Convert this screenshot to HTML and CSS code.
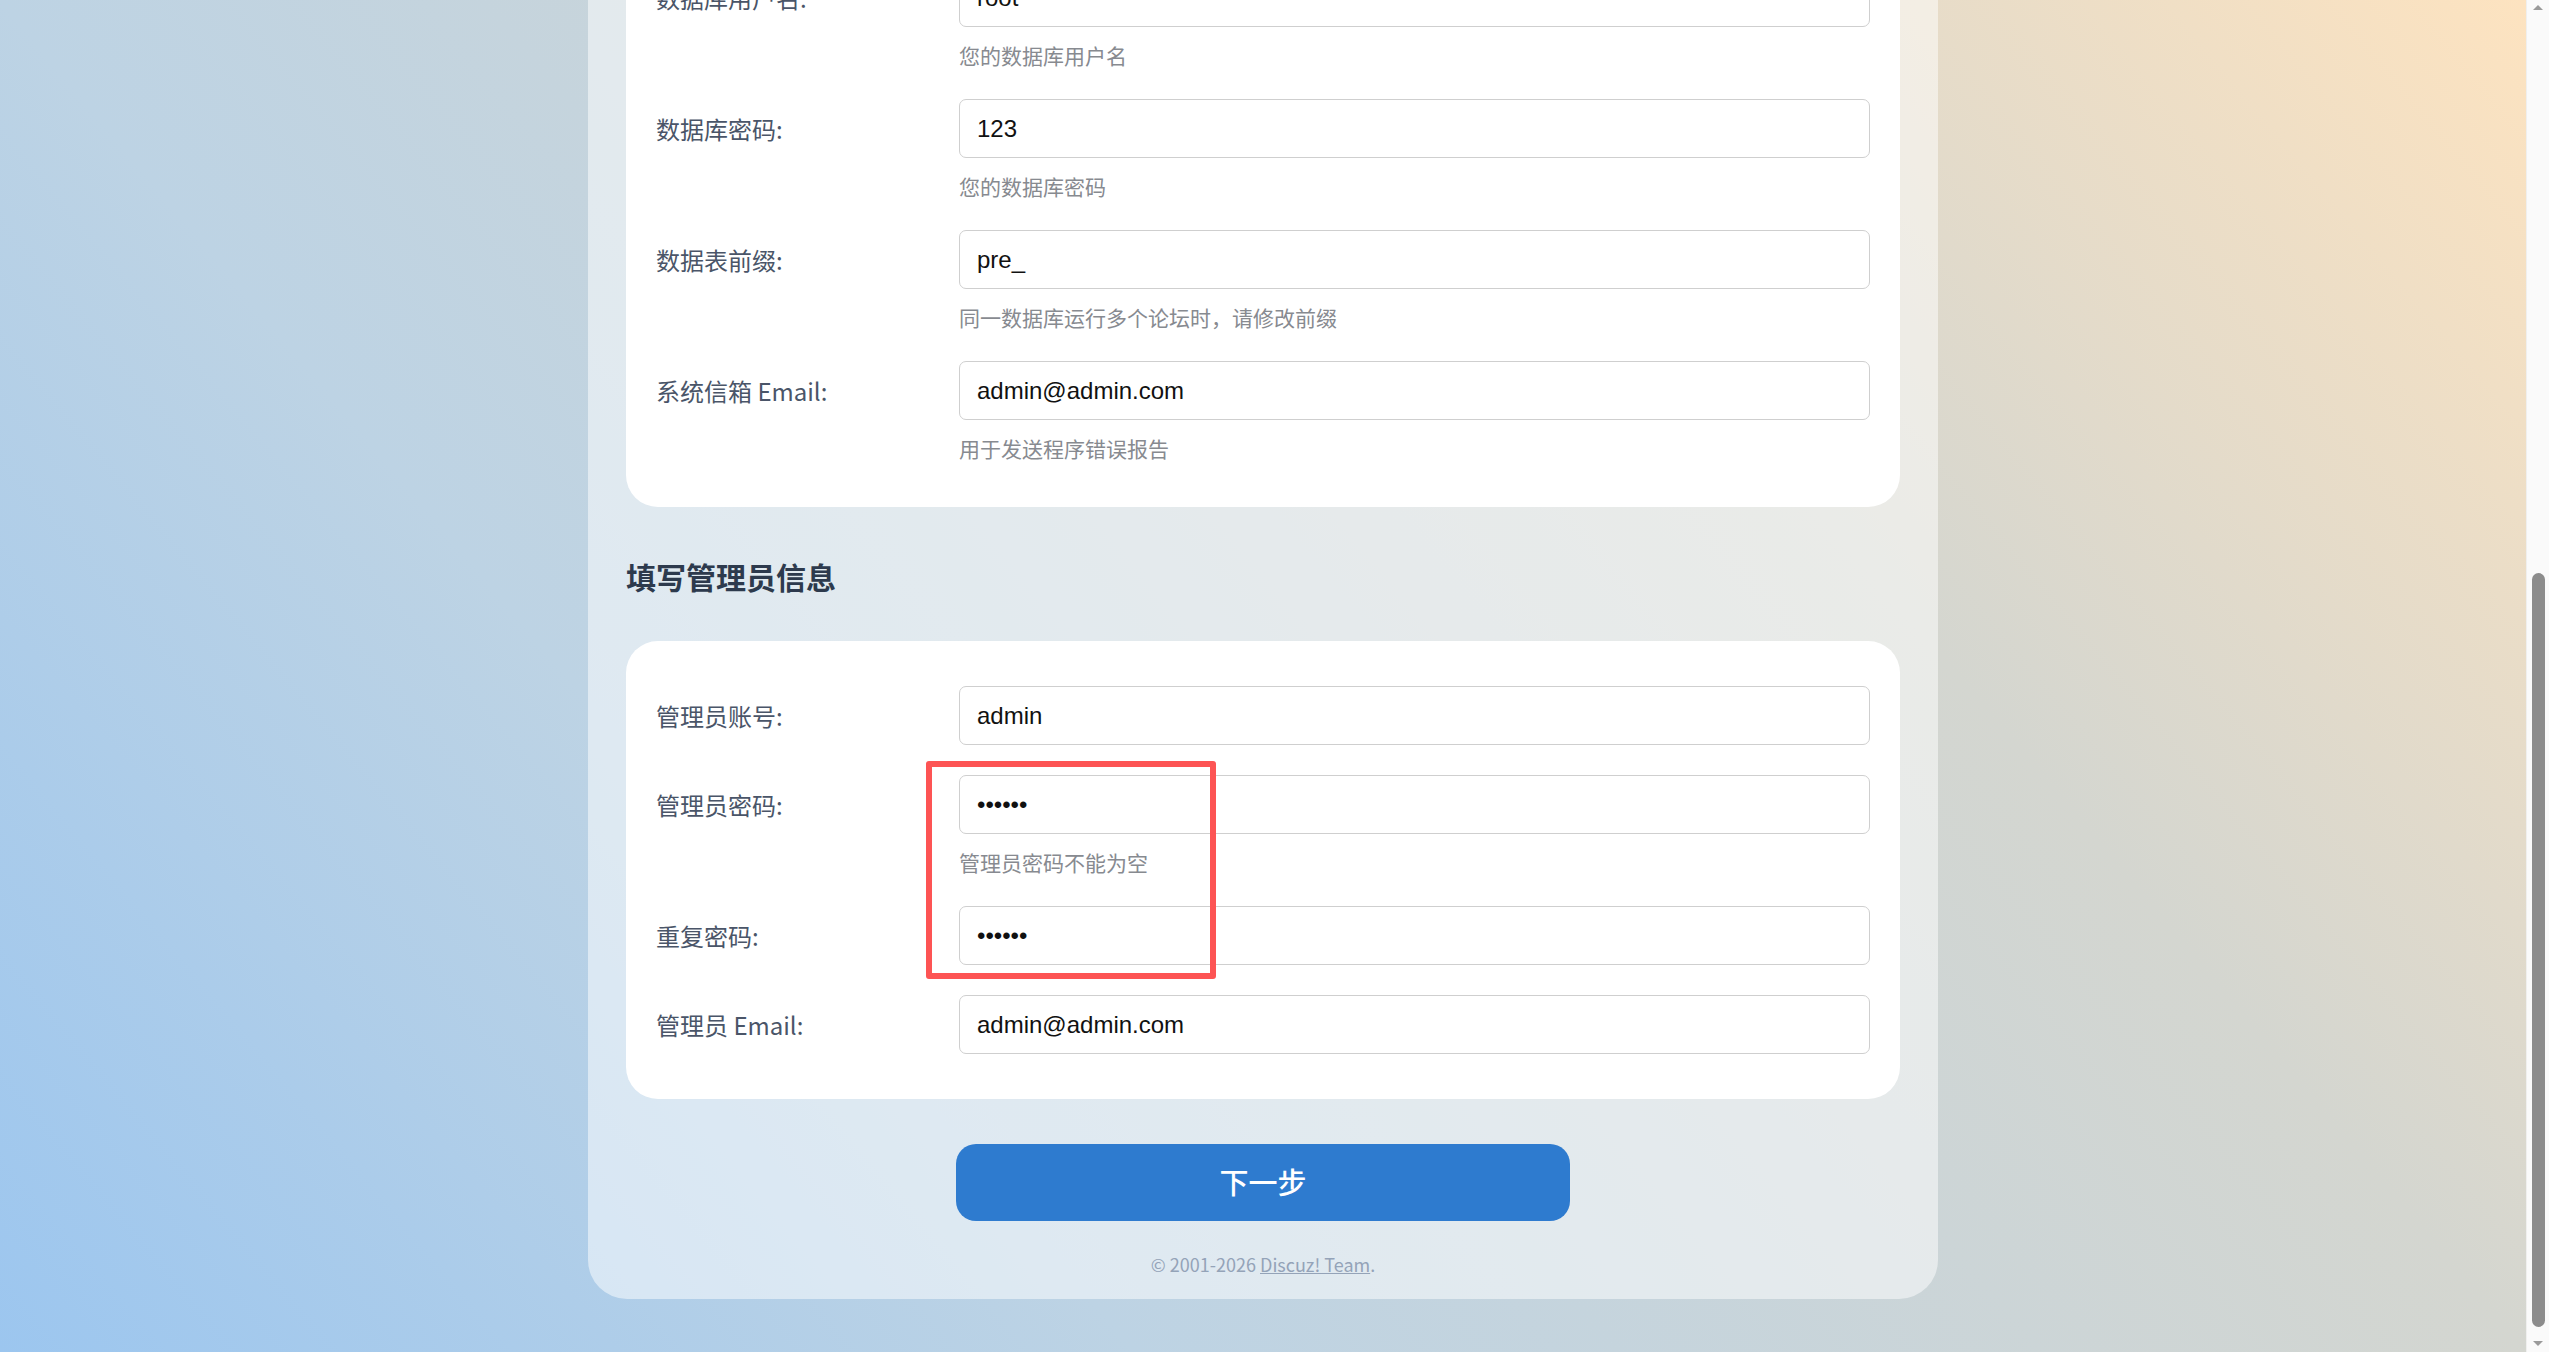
FILE: index.html
```html
<!DOCTYPE html>
<html lang="zh-CN">
  <head>
    <meta charset="UTF-8" />
    <meta name="viewport" content="width=device-width, initial-scale=1" />
    <title>Discuz! 安装向导</title>
    <link rel="stylesheet" href="styles.css">
  </head>
  <body>
    <div class="viewport">
      <main class="panel">
        <section class="form-card">
          <div class="field">
            <label for="dbuser">数据库用户名:</label>
            <input type="text" id="dbuser" value="root" />
            <p class="hint">您的数据库用户名</p>
          </div>
          <div class="field">
            <label for="dbpw">数据库密码:</label>
            <input type="text" id="dbpw" value="123" />
            <p class="hint">您的数据库密码</p>
          </div>
          <div class="field">
            <label for="tablepre">数据表前缀:</label>
            <input type="text" id="tablepre" value="pre_" />
            <p class="hint">同一数据库运行多个论坛时，请修改前缀</p>
          </div>
          <div class="field">
            <label for="adminemail">系统信箱 Email:</label>
            <input type="text" id="adminemail" value="admin@admin.com" />
            <p class="hint">用于发送程序错误报告</p>
          </div>
        </section>

        <h2 class="section-title">填写管理员信息</h2>

        <section class="form-card admin-card">
          <div class="field">
            <label for="username">管理员账号:</label>
            <input type="text" id="username" value="admin" />
          </div>
          <div class="field">
            <label for="password">管理员密码:</label>
            <input type="password" id="password" value="123456" />
            <p class="hint">管理员密码不能为空</p>
          </div>
          <div class="field">
            <label for="password2">重复密码:</label>
            <input type="password" id="password2" value="123456" />
          </div>
          <div class="field">
            <label for="email">管理员 Email:</label>
            <input type="text" id="email" value="admin@admin.com" />
          </div>
          <div class="highlight"></div>
        </section>

        <button type="submit" class="next-btn">下一步</button>

        <p class="footer">&copy; 2001-2026 <a href="#">Discuz! Team</a>.</p>
      </main>
    </div>

    <div class="scrollbar">
      <span class="arrow up"></span>
      <span class="thumb"></span>
      <span class="arrow down"></span>
    </div>
  </body>
</html>
```

FILE: styles.css
```css
* {
  box-sizing: border-box;
  margin: 0;
  padding: 0;
}

html,
body {
  height: 100%;
}

body {
  display: flex;
  height: 1352px;
  overflow: hidden;
  font-family: "Noto Sans CJK SC", "Noto Sans", sans-serif;
  color: #4a5568;
}

/* page is shown scrolled to the bottom */
.viewport {
  flex: 1;
  display: flex;
  flex-direction: column;
  justify-content: flex-end;
  align-items: center;
  padding-bottom: 53px;
  overflow: hidden;
  background: linear-gradient(50deg, #9cc6ef 0%, #bdd3e4 31%, #d4d6d0 69%, #fde3c0 100%);
}

.panel {
  flex-shrink: 0;
  width: 1350px;
  padding: 0 38px 20px;
  background: rgba(255, 255, 255, 0.5);
  border-radius: 0 0 39px 39px;
  display: flex;
  flex-direction: column;
}

.form-card {
  position: relative;
  background: #fff;
  border-radius: 32px;
  padding: 45px 30px;
  display: flex;
  flex-direction: column;
  gap: 30px;
}

.field {
  display: grid;
  grid-template-columns: 303px 1fr;
}

.field label {
  grid-column: 1;
  grid-row: 1;
  font-size: 24px;
  line-height: 59px;
  color: #4a5568;
}

.field input {
  grid-column: 2;
  grid-row: 1;
  height: 59px;
  width: 100%;
  padding: 0 17px;
  border: 1px solid #cfcfcf;
  border-radius: 7px;
  background: #fff;
  font-family: "Liberation Sans", Arial, sans-serif;
  font-size: 24px;
  color: #111;
  outline: none;
}

.hint {
  grid-column: 2;
  grid-row: 2;
  margin-top: 14px;
  font-size: 21px;
  line-height: 28px;
  color: #878a90;
}

.section-title {
  margin: 49px 0 45px;
  font-size: 30px;
  line-height: 40px;
  font-weight: 700;
  color: #2d3a4d;
}

/* red annotation frame */
.highlight {
  position: absolute;
  left: 300px;
  top: 120px;
  width: 290px;
  height: 218px;
  border: 6px solid #fd5454;
  border-radius: 3px;
}

.next-btn {
  align-self: center;
  width: 614px;
  height: 77px;
  margin-top: 45px;
  padding-bottom: 4px;
  border: none;
  border-radius: 20px;
  background: #2e7bcf;
  color: #fff;
  font-family: "Noto Sans CJK SC", sans-serif;
  font-size: 29px;
  font-weight: 500;
  cursor: pointer;
}

.footer {
  margin-top: 28px;
  text-align: center;
  font-size: 18px;
  line-height: 30px;
  color: #94a3b8;
}

.footer a {
  color: #94a3b8;
}

.scrollbar {
  width: 23px;
  flex-shrink: 0;
  background: #fafafa;
  border-left: 1px solid #efefef;
  display: flex;
  flex-direction: column;
  align-items: center;
}

.arrow {
  width: 0;
  height: 0;
  border-left: 5px solid transparent;
  border-right: 5px solid transparent;
}

.arrow.up {
  margin-top: 5px;
  border-bottom: 5px solid #9a9a9a;
}

.thumb {
  margin-top: auto;
  width: 13px;
  height: 754px;
  border-radius: 7px;
  background: #8c8c8c;
}

.arrow.down {
  margin: 14px 0 6px;
  border-top: 5px solid #9a9a9a;
}
```
